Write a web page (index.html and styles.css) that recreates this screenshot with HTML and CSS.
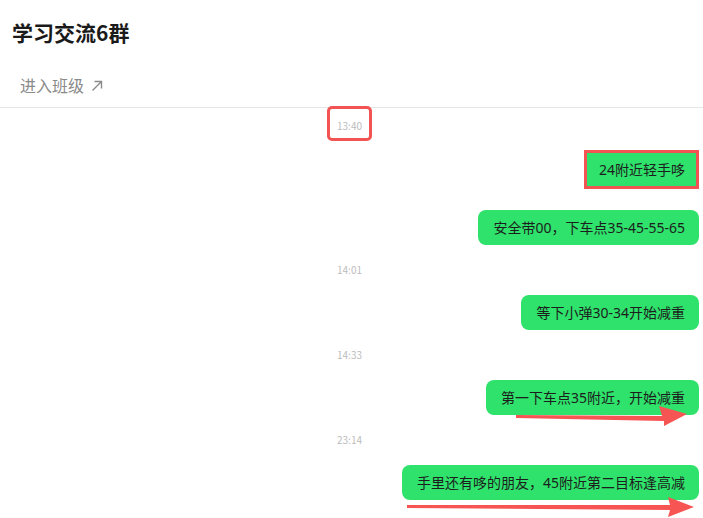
FILE: index.html
```html
<!DOCTYPE html>
<html lang="zh-CN">
<head>
    <meta charset="UTF-8">
    <meta name="viewport" content="width=device-width, initial-scale=1.0">
    <title>学习交流6群</title>
    <link rel="stylesheet" href="styles.css">
</head>
<body>
    <div class="page">
        <div class="header">
            <h1 class="title">学习交流6群</h1>
            <a class="enter" href="#">进入班级 <svg class="enter-arrow" width="12" height="12" viewBox="0 0 12 12"><path d="M1.5 10.5 L10.5 1.5 M3.5 1.5 H10.5 V8.5" /></svg></a>
        </div>
        <div class="chat">
            <div class="time time-first"><span class="mark">13:40</span></div>
            <div class="row"><div class="bubble bubble-mark">24附近轻手哆</div></div>
            <div class="row"><div class="bubble">安全带00，下车点35-45-55-65</div></div>
            <div class="time">14:01</div>
            <div class="row"><div class="bubble">等下小弹30-34开始减重</div></div>
            <div class="time">14:33</div>
            <div class="row"><div class="bubble">第一下车点35附近，开始减重</div></div>
            <div class="time">23:14</div>
            <div class="row"><div class="bubble">手里还有哆的朋友，45附近第二目标逢高减</div></div>
        </div>
        <svg class="notes" width="703" height="518" viewBox="0 0 703 518">
            <polygon points="516,415 662,416 659,406 687,414 664,426 664,421 516,418" />
            <polygon points="407,505 670,505 668,497 694,507 668,517 670,510 407,508" />
        </svg>
    </div>
</body>
</html>
```

FILE: styles.css
```css
body {
    margin: 0;
    font-family: "Noto Sans CJK SC", "Noto Sans", sans-serif;
    background: #fff;
}
.page {
    position: relative;
    width: 703px;
    height: 518px;
    overflow: hidden;
}
.header {
    border-bottom: 1px solid #e6e6e6;
}
.title {
    margin: 0;
    padding: 19px 12px 0;
    font-size: 21px;
    line-height: 26px;
    font-weight: bold;
    color: #1a1a1a;
}
.enter {
    display: block;
    padding: 29px 20px 0;
    height: 33px;
    font-size: 16px;
    line-height: 22px;
    color: #8a8a8a;
    text-decoration: none;
}
.enter-arrow {
    margin-left: 3px;
    vertical-align: 0;
}
.enter-arrow path {
    fill: none;
    stroke: #8a8a8a;
    stroke-width: 1.4;
}
.chat {
    padding: 11px 4px 0 0;
}
.time {
    text-align: center;
    font-size: 10px;
    line-height: 14px;
    color: #bcbcbc;
    margin: 18px 0;
}
.time-first {
    margin: 0 0 20px;
}
.mark {
    display: inline-block;
    padding: 10px 7px 5px;
    margin: -10px 0 -5px;
    outline: 3px solid #f25454;
    border-radius: 2px;
}
.row {
    display: flex;
    justify-content: flex-end;
}
.row + .row {
    margin-top: 22px;
}
.bubble {
    background: #2ee26b;
    color: #1d1d1d;
    font-family: "Noto Sans", "Noto Sans CJK SC", sans-serif;
    font-size: 14px;
    line-height: 35px;
    padding: 0 14px 0 15px;
    border-radius: 8px;
}
.bubble-mark {
    line-height: 33px;
    padding: 0 11px 0 12px;
    margin: 0 3px 2px 0;
    border-radius: 0;
    outline: 3px solid #f25454;
}
.notes {
    position: absolute;
    left: 0;
    top: 0;
    pointer-events: none;
}
.notes polygon {
    fill: #f75454;
}
```
